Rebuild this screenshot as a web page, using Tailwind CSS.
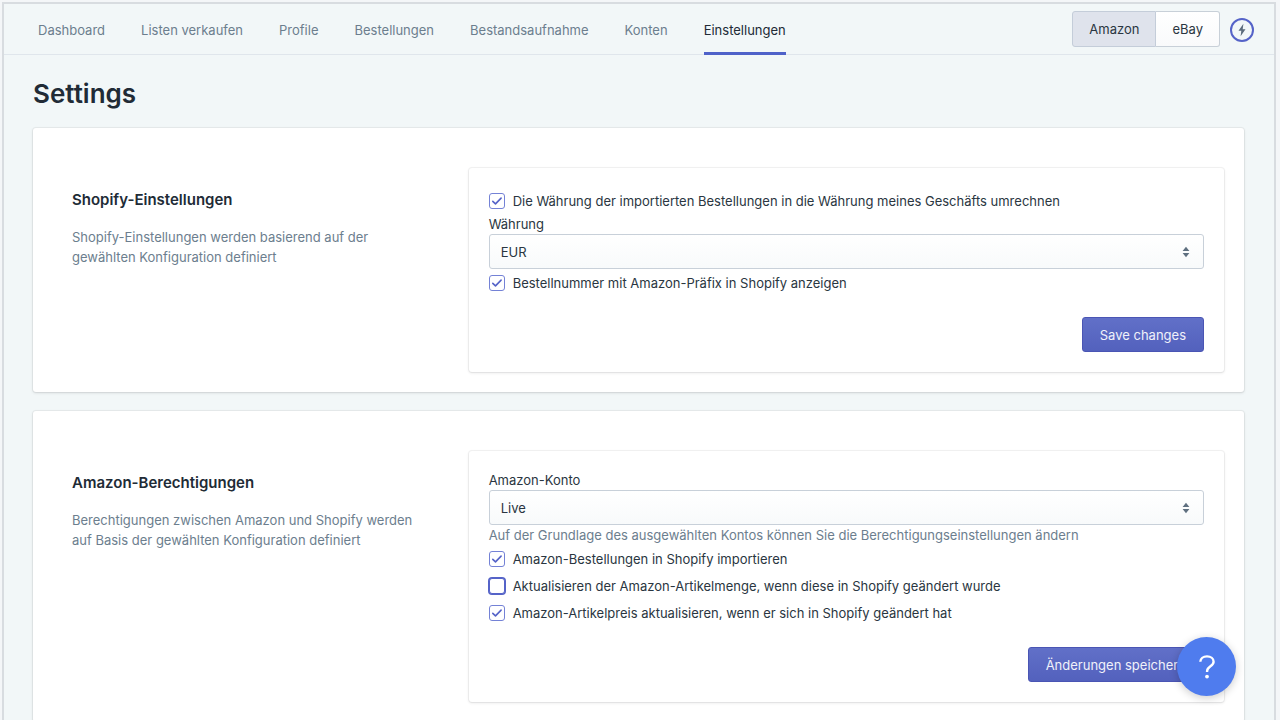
<!DOCTYPE html>
<html lang="de">
<head>
<meta charset="utf-8">
<meta name="viewport" content="width=device-width, initial-scale=1">
<title>Settings</title>
<script src="https://cdn.jsdelivr.net/npm/@tailwindcss/browser@4"></script>
</head>
<body class="bg-[#f4f6f8] pt-0.5 font-['Inter',sans-serif] text-[13px] leading-5 text-[#2a3641]">
<div class="mr-1 ml-0.5 min-h-screen border-2 border-[#d8dce0] bg-[#f2f7f8] pb-5">
  <header class="flex h-[51px] items-stretch border-b border-[#e0e6ec] pr-5 pl-[34px]">
    <nav class="flex gap-9 whitespace-nowrap text-[#6c7e8e]">
      <a href="#" class="-mb-px flex items-center">Dashboard</a>
      <a href="#" class="-mb-px flex items-center">Listen verkaufen</a>
      <a href="#" class="-mb-px flex items-center">Profile</a>
      <a href="#" class="-mb-px flex items-center">Bestellungen</a>
      <a href="#" class="-mb-px flex items-center">Bestandsaufnahme</a>
      <a href="#" class="-mb-px flex items-center">Konten</a>
      <a href="#" aria-current="page" class="-mb-px flex items-center border-b-3 border-[#4f62c9] pt-[3px] text-[#212b36]">Einstellungen</a>
    </nav>
    <div class="ml-auto flex items-center gap-2.5">
      <div class="flex h-9">
        <button class="rounded-l-[3px] border border-[#c4cdd9] bg-[#dfe3ec] px-4">Amazon</button>
        <button class="rounded-r-[3px] border border-l-0 border-[#c8d0d8] bg-linear-to-b from-white to-[#f9fafb] px-4">eBay</button>
      </div>
      <button aria-label="Schnellaktionen" class="mt-0.5 flex size-6 items-center justify-center rounded-full border-2 border-[#5563c8]">
        <svg class="size-3.5 shrink-0" viewBox="0 0 14 14" fill="#5b6b7b"><path d="M8.4.8 3.5 7.7h2.8L5.6 13.2l4.9-6.9H7.7z"/></svg>
      </button>
    </div>
  </header>

  <main class="pt-[21px] pr-[30px] pl-[29px]">
    <h1 class="mb-4 text-[26px] leading-9 font-semibold text-[#212b36]">Settings</h1>

    <section class="mb-[19px] grid grid-cols-[397fr_756fr] rounded-[3px] bg-white pt-10 pr-5 pb-5 pl-[39px] shadow-[0_0_0_1px_rgba(63,63,68,0.06),0_1px_3px_0_rgba(63,63,68,0.16)]">
      <div class="pt-5 pr-10">
        <h2 class="mb-[15px] text-[15px] leading-6 font-semibold text-[#212b36]">Shopify-Einstellungen</h2>
        <p class="text-[#6c7e8e]">Shopify-Einstellungen werden basierend auf der gewählten Konfiguration definiert</p>
      </div>
      <form class="rounded-[3px] px-5 pt-[19px] pb-5 shadow-[0_0_0_1px_rgba(63,63,68,0.06),0_1px_3px_0_rgba(63,63,68,0.14)]">
        <label class="flex h-[27px] items-center gap-2">
          <span class="relative flex size-4">
            <input type="checkbox" checked class="peer size-4 appearance-none rounded-[3px] border border-[#7482d6] bg-white">
            <svg class="pointer-events-none absolute inset-0 hidden size-4 peer-checked:block" viewBox="0 0 16 16" fill="none" stroke="#5563c8" stroke-width="1.6" stroke-linecap="round" stroke-linejoin="round"><path d="m3.8 8.3 2.7 2.6 5.6-5.8"/></svg>
          </span>
          Die Währung der importierten Bestellungen in die Währung meines Geschäfts umrechnen
        </label>
        <label for="currency" class="block">Währung</label>
        <div class="relative">
          <select id="currency" class="block h-[35px] w-full appearance-none rounded-[3px] border border-[#c8d0d9] bg-linear-to-b from-white to-[#f8fafb] px-[11px]"><option>EUR</option></select>
          <svg class="pointer-events-none absolute top-3 right-3.5 h-3 w-2" viewBox="0 0 8 12" fill="#5f7080"><path d="M4 .8 7.4 5H.6zM4 11.2.6 7h6.8z"/></svg>
        </div>
        <label class="flex h-[27px] items-center gap-2">
          <span class="relative flex size-4">
            <input type="checkbox" checked class="peer size-4 appearance-none rounded-[3px] border border-[#7482d6] bg-white">
            <svg class="pointer-events-none absolute inset-0 hidden size-4 peer-checked:block" viewBox="0 0 16 16" fill="none" stroke="#5563c8" stroke-width="1.6" stroke-linecap="round" stroke-linejoin="round"><path d="m3.8 8.3 2.7 2.6 5.6-5.8"/></svg>
          </span>
          Bestellnummer mit Amazon-Präfix in Shopify anzeigen
        </label>
        <div class="mt-[21px] flex justify-end">
          <button type="button" class="h-[35px] rounded-[3px] border border-[#4a55b4] bg-linear-to-b from-[#6170c8] to-[#5361bd] px-[17px] text-[#f0f1fa]">Save changes</button>
        </div>
      </form>
    </section>

    <section class="grid grid-cols-[397fr_756fr] rounded-[3px] bg-white pt-10 pr-5 pb-5 pl-[39px] shadow-[0_0_0_1px_rgba(63,63,68,0.06),0_1px_3px_0_rgba(63,63,68,0.16)]">
      <div class="pt-5 pr-10">
        <h2 class="mb-[15px] text-[15px] leading-6 font-semibold text-[#212b36]">Amazon-Berechtigungen</h2>
        <p class="text-[#6c7e8e]">Berechtigungen zwischen Amazon und Shopify werden auf Basis der gewählten Konfiguration definiert</p>
      </div>
      <form class="rounded-[3px] px-5 pt-[19px] pb-5 shadow-[0_0_0_1px_rgba(63,63,68,0.06),0_1px_3px_0_rgba(63,63,68,0.14)]">
        <label for="account" class="block">Amazon-Konto</label>
        <div class="relative">
          <select id="account" class="block h-[35px] w-full appearance-none rounded-[3px] border border-[#c8d0d9] bg-linear-to-b from-white to-[#f8fafb] px-[11px]"><option>Live</option></select>
          <svg class="pointer-events-none absolute top-3 right-3.5 h-3 w-2" viewBox="0 0 8 12" fill="#5f7080"><path d="M4 .8 7.4 5H.6zM4 11.2.6 7h6.8z"/></svg>
        </div>
        <p class="text-[#6c7e8e]">Auf der Grundlage des ausgewählten Kontos können Sie die Berechtigungseinstellungen ändern</p>
        <label class="flex h-[27px] items-center gap-2">
          <span class="relative flex size-4">
            <input type="checkbox" checked class="peer size-4 appearance-none rounded-[3px] border border-[#7482d6] bg-white">
            <svg class="pointer-events-none absolute inset-0 hidden size-4 peer-checked:block" viewBox="0 0 16 16" fill="none" stroke="#5563c8" stroke-width="1.6" stroke-linecap="round" stroke-linejoin="round"><path d="m3.8 8.3 2.7 2.6 5.6-5.8"/></svg>
          </span>
          Amazon-Bestellungen in Shopify importieren
        </label>
        <label class="flex h-[27px] items-center gap-2">
          <span class="relative flex size-4">
            <input type="checkbox" class="peer size-4 appearance-none rounded-[3px] border border-[#5563c8] bg-white ring-1 ring-[#5563c8]">
            <svg class="pointer-events-none absolute inset-0 hidden size-4 peer-checked:block" viewBox="0 0 16 16" fill="none" stroke="#5563c8" stroke-width="1.6" stroke-linecap="round" stroke-linejoin="round"><path d="m3.8 8.3 2.7 2.6 5.6-5.8"/></svg>
          </span>
          Aktualisieren der Amazon-Artikelmenge, wenn diese in Shopify geändert wurde
        </label>
        <label class="flex h-[27px] items-center gap-2">
          <span class="relative flex size-4">
            <input type="checkbox" checked class="peer size-4 appearance-none rounded-[3px] border border-[#7482d6] bg-white">
            <svg class="pointer-events-none absolute inset-0 hidden size-4 peer-checked:block" viewBox="0 0 16 16" fill="none" stroke="#5563c8" stroke-width="1.6" stroke-linecap="round" stroke-linejoin="round"><path d="m3.8 8.3 2.7 2.6 5.6-5.8"/></svg>
          </span>
          Amazon-Artikelpreis aktualisieren, wenn er sich in Shopify geändert hat
        </label>
        <div class="mt-[21px] flex justify-end">
          <button type="button" class="h-[35px] rounded-[3px] border border-[#4a55b4] bg-linear-to-b from-[#6170c8] to-[#5361bd] px-[17px] text-[#f0f1fa]">Änderungen speichern</button>
        </div>
      </form>
    </section>
  </main>
</div>
<button aria-label="Hilfe" class="fixed right-11 bottom-6 flex size-[59px] items-center justify-center rounded-full bg-[#4f7cee] shadow-[0_2px_8px_rgba(0,0,0,0.2)]">
  <svg class="h-6 w-4" viewBox="0 0 16 24" fill="none" stroke="#fff" stroke-width="2.4" stroke-linejoin="round"><path d="M1.3 6.8C1.5 3.5 4.2 1.4 8 1.4s6.6 2.1 6.6 5.3c0 4.5-6.5 4.5-6.5 9.3v.9"/><circle cx="8" cy="21.6" r="1.9" fill="#fff" stroke="none"/></svg>
</button>
</body>
</html>
